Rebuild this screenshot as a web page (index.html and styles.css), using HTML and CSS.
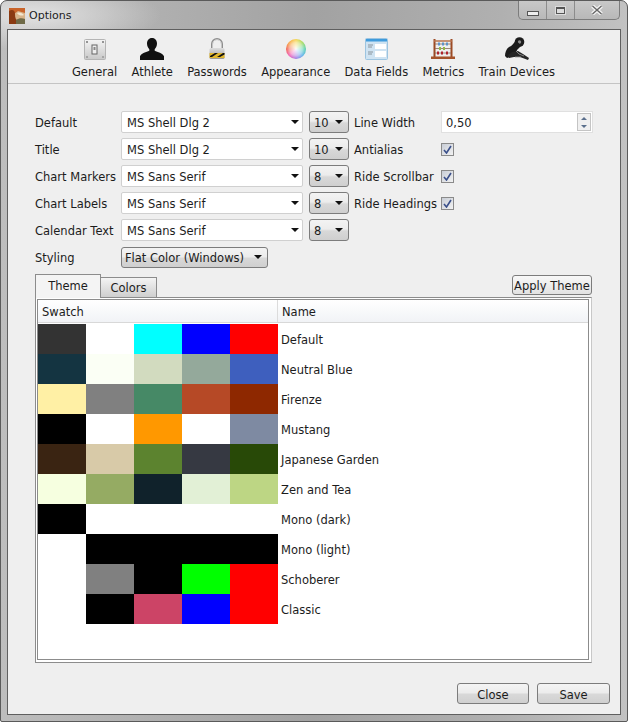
FILE: index.html
```html
<!DOCTYPE html>
<html lang="en">
<head>
    <meta charset="UTF-8">
    <meta name="viewport" content="width=device-width, initial-scale=1.0">
    <title>Options</title>
    <link rel="stylesheet" href="styles.css">
</head>
<body>
<div class="window">
    <div class="titlebar">
        <svg class="app-icon" width="16" height="16" viewBox="0 0 16 16">
            <rect width="16" height="16" rx="1" fill="#d8b48a"/>
            <path d="M0 0h16v5L9 3 5 6 0 5z" fill="#c9642a"/>
            <path d="M0 3c3-2 6-1 6 3s1 6 3 7v3H0z" fill="#8a3a12"/>
            <path d="M7 12c3-2 6-2 9-1v5H7z" fill="#6f6a48"/>
            <path d="M8 5c3-1 5 0 7 2-2 1-5 1-7-2z" fill="#f2e6d0"/>
        </svg>
        <span class="title-text">Options</span>
        <div class="win-controls">
            <div class="win-btn"><span class="min-glyph"></span></div>
            <div class="win-btn"><span class="max-glyph"></span></div>
            <div class="win-btn win-close">
                <svg width="12" height="10" viewBox="0 0 12 10"><path d="M1.500 1l9 8M10.500 1l-9 8" stroke="#f4f4f4" stroke-width="3.800"/><path d="M1.500 1l9 8M10.500 1l-9 8" stroke="#666" stroke-width="1.400"/></svg>
            </div>
        </div>
    </div>

    <div class="panel">
        <div class="toolbar">
            <div class="tool">
                <svg width="22" height="22" viewBox="0 0 22 22">
                    <defs><linearGradient id="steel" x1="0" y1="0" x2="0" y2="1"><stop offset="0" stop-color="#f4f4f4"/><stop offset="1" stop-color="#c8c8c8"/></linearGradient></defs>
                    <rect x="0.500" y="1.500" width="21" height="20" rx="1" fill="url(#steel)" stroke="#b4b4b4"/>
                    <circle cx="3" cy="4" r="1" fill="#777"/><circle cx="19" cy="4" r="1" fill="#777"/>
                    <circle cx="3" cy="19" r="1" fill="#999"/><circle cx="19" cy="19" r="1" fill="#999"/>
                    <rect x="8" y="7" width="5" height="9" fill="#eee" stroke="#666"/>
                    <rect x="9.500" y="9" width="2" height="3" fill="#888"/>
                </svg>
                <span>General</span>
            </div>
            <div class="tool">
                <svg width="24" height="22" viewBox="0 0 24 22">
                    <path d="M12 0c3.300 0 5 2.600 5 5.600 0 2.400-1 4.400-2.300 5.700v1.500c2.800 1.100 8.100 2.500 9.300 5.400V22H0v-3.800c1.200-2.900 6.500-4.300 9.300-5.400v-1.500C8 10 7 8 7 5.600 7 2.600 8.700 0 12 0z" fill="#111"/>
                </svg>
                <span>Athlete</span>
            </div>
            <div class="tool">
                <svg width="16" height="22" viewBox="0 0 16 22">
                    <defs><linearGradient id="lockbody" x1="0" y1="0" x2="0" y2="1"><stop offset="0" stop-color="#ddd"/><stop offset="1" stop-color="#9a9a9a"/></linearGradient></defs>
                    <path d="M3 11V6a5 5 0 0 1 10 0v5" fill="none" stroke="#8e8e8e" stroke-width="2"/>
                    <path d="M3.600 11V6a4.400 4.400 0 0 1 8.800 0v5" fill="none" stroke="#dcdcdc" stroke-width="0.800"/>
                    <rect x="0.500" y="10" width="15" height="11" rx="1.500" fill="url(#lockbody)"/>
                    <rect x="0.500" y="15" width="15" height="5" fill="#e0b62c"/>
                    <path d="M1 18l5-3h3l-6 4H1zM8 19l6-4h1.500v1.500L11 19z" fill="#111"/>
                </svg>
                <span>Passwords</span>
            </div>
            <div class="tool">
                <div class="colorwheel"></div>
                <span>Appearance</span>
            </div>
            <div class="tool">
                <svg width="23" height="22" viewBox="0 0 23 22">
                    <rect x="0.500" y="0.500" width="22" height="21" rx="1" fill="#cfe3f2" stroke="#9cc4e0"/>
                    <rect x="1" y="1" width="21" height="2.500" fill="#3f9bdc"/>
                    <rect x="10" y="6" width="11" height="5" fill="#fff"/>
                    <rect x="10" y="13" width="11" height="6" fill="#fff"/>
                    <path d="M3 7h5M3 9h4M3 14h5M3 16h4" stroke="#8a949c" stroke-width="1"/>
                </svg>
                <span>Data Fields</span>
            </div>
            <div class="tool">
                <svg width="24" height="22" viewBox="0 0 24 22">
                    <path d="M3.500 1v18M20.500 1v18" stroke="#9c4a24" stroke-width="2"/>
                    <path d="M3 3h18" stroke="#b8734c" stroke-width="1.500"/>
                    <rect x="0" y="18.500" width="24" height="2.500" fill="#a5532a"/>
                    <path d="M4 6h16M4 10.500h16M4 15h16" stroke="#8a6a58" stroke-width="0.800"/>
                    <path d="M7 6h2M11 6h2M15 6h2" stroke="#5f93c8" stroke-width="3.200"/>
                    <path d="M8 10.500h2M12 10.500h2" stroke="#93b84a" stroke-width="3.200"/>
                    <path d="M6 15h2M10 15h2M15 15h2" stroke="#b0242c" stroke-width="3.200"/>
                </svg>
                <span>Metrics</span>
            </div>
            <div class="tool">
                <svg width="24" height="23" viewBox="0 0 24 23" class="tool-train">
                    <circle cx="14.500" cy="5" r="4.800" fill="#1c1c1c"/>
                    <circle cx="14.500" cy="5" r="1.700" fill="#8a8a8a"/>
                    <path d="M11 3l5 6-4 4-1 5-9 3-2-2c0-3 1-7 4-9 3-1 5-4 7-7z" fill="#1c1c1c"/>
                    <path d="M7 15l6-1 5 3 6 4-1 2-8-3-6 0-5 1-1-3z" fill="#262626"/>
                    <path d="M11 14l3 3 5 2M10 20h6" stroke="#9a9a9a" stroke-width="0.800" fill="none"/>
                </svg>
                <span>Train Devices</span>
            </div>
        </div>

        <div class="content">
            <div class="form-grid">
                <label>Default</label>
                <div class="combo edit"><span>MS Shell Dlg 2</span><i></i></div>
                <div class="combo size"><span>10</span><i></i></div>
                <label>Line Width</label>
                <div class="spin">
                    <span>0,50</span>
                    <div class="spin-arrows"><b class="up"></b><b class="down"></b></div>
                </div>

                <label>Title</label>
                <div class="combo edit"><span>MS Shell Dlg 2</span><i></i></div>
                <div class="combo size"><span>10</span><i></i></div>
                <label>Antialias</label>
                <div class="check"><svg width="9" height="9" viewBox="0 0 9 9"><path d="M1 5l2.500 3L8 1" fill="none" stroke="#3a4f8a" stroke-width="1.600"/></svg></div>

                <label>Chart Markers</label>
                <div class="combo edit"><span>MS Sans Serif</span><i></i></div>
                <div class="combo size"><span>8</span><i></i></div>
                <label>Ride Scrollbar</label>
                <div class="check"><svg width="9" height="9" viewBox="0 0 9 9"><path d="M1 5l2.500 3L8 1" fill="none" stroke="#3a4f8a" stroke-width="1.600"/></svg></div>

                <label>Chart Labels</label>
                <div class="combo edit"><span>MS Sans Serif</span><i></i></div>
                <div class="combo size"><span>8</span><i></i></div>
                <label>Ride Headings</label>
                <div class="check"><svg width="9" height="9" viewBox="0 0 9 9"><path d="M1 5l2.500 3L8 1" fill="none" stroke="#3a4f8a" stroke-width="1.600"/></svg></div>

                <label>Calendar Text</label>
                <div class="combo edit"><span>MS Sans Serif</span><i></i></div>
                <div class="combo size"><span>8</span><i></i></div>
                <div class="spacer"></div>
                <div class="spacer"></div>

                <label>Styling</label>
                <div class="combo styling"><span>Flat Color (Windows)</span><i></i></div>
            </div>

            <div class="tabs">
                <div class="tab active">Theme</div>
                <div class="tab">Colors</div>
                <button class="apply">Apply Theme</button>
            </div>

            <div class="pane">
                <div class="table">
                    <div class="table-head">
                        <div class="head-swatch">Swatch</div>
                        <div class="head-name">Name</div>
                    </div>
                    <div class="theme-row">
                        <div class="swatches"><s style="background:#333333"></s><s style="background:#ffffff"></s><s style="background:#00ffff"></s><s style="background:#0000ff"></s><s style="background:#ff0000"></s></div>
                        <span>Default</span>
                    </div>
                    <div class="theme-row">
                        <div class="swatches"><s style="background:#143441"></s><s style="background:#fbfff5"></s><s style="background:#d2dbbf"></s><s style="background:#94a99b"></s><s style="background:#3e5fbe"></s></div>
                        <span>Neutral Blue</span>
                    </div>
                    <div class="theme-row">
                        <div class="swatches"><s style="background:#fff0a5"></s><s style="background:#808080"></s><s style="background:#468966"></s><s style="background:#b64926"></s><s style="background:#8e2800"></s></div>
                        <span>Firenze</span>
                    </div>
                    <div class="theme-row">
                        <div class="swatches"><s style="background:#000000"></s><s style="background:#ffffff"></s><s style="background:#ff9800"></s><s style="background:#ffffff"></s><s style="background:#7e8aa2"></s></div>
                        <span>Mustang</span>
                    </div>
                    <div class="theme-row">
                        <div class="swatches"><s style="background:#3a2412"></s><s style="background:#d8caa8"></s><s style="background:#5c832f"></s><s style="background:#363942"></s><s style="background:#284907"></s></div>
                        <span>Japanese Garden</span>
                    </div>
                    <div class="theme-row">
                        <div class="swatches"><s style="background:#f6ffe0"></s><s style="background:#95ab63"></s><s style="background:#10222b"></s><s style="background:#e2f0d6"></s><s style="background:#bdd684"></s></div>
                        <span>Zen and Tea</span>
                    </div>
                    <div class="theme-row">
                        <div class="swatches"><s style="background:#000000"></s><s style="background:#ffffff"></s><s style="background:#ffffff"></s><s style="background:#ffffff"></s><s style="background:#ffffff"></s></div>
                        <span>Mono (dark)</span>
                    </div>
                    <div class="theme-row">
                        <div class="swatches"><s style="background:#ffffff"></s><s style="background:#000000"></s><s style="background:#000000"></s><s style="background:#000000"></s><s style="background:#000000"></s></div>
                        <span>Mono (light)</span>
                    </div>
                    <div class="theme-row">
                        <div class="swatches"><s style="background:#ffffff"></s><s style="background:#808080"></s><s style="background:#000000"></s><s style="background:#00ff00"></s><s style="background:#ff0000"></s></div>
                        <span>Schoberer</span>
                    </div>
                    <div class="theme-row">
                        <div class="swatches"><s style="background:#ffffff"></s><s style="background:#000000"></s><s style="background:#cc4466"></s><s style="background:#0000ff"></s><s style="background:#ff0000"></s></div>
                        <span>Classic</span>
                    </div>
                </div>
            </div>

            <div class="actions">
                <button class="btn btn-close">Close</button>
                <button class="btn">Save</button>
            </div>
        </div>
    </div>
</div>
</body>
</html>
```

FILE: styles.css
```css
html, body {
    margin: 0;
    padding: 0;
    background: #fff;
}
body {
    width: 628px;
    height: 723px;
    overflow: hidden;
    font-family: "DejaVu Sans", sans-serif;
    font-size: 11.5px;
    color: #1c1c1c;
}
.window {
    box-sizing: border-box;
    width: 628px;
    height: 722px;
    display: flex;
    flex-direction: column;
    border: 1px solid #5a5a5a;
    border-radius: 7px 7px 2px 2px;
    background:
        radial-gradient(ellipse 130px 34px at 30px 14px, #e2e2e2 0%, rgba(226, 226, 226, 0) 100%),
        linear-gradient(90deg, #bdbdbd 0%, #a2a2a2 50%, #b0b0b0 80%, #c2c2c2 100%);
    background-color: #a8a8a8;
}
.titlebar {
    height: 28px;
    flex: none;
    display: flex;
    align-items: flex-start;
    padding-left: 8px;
}
.app-icon {
    margin-top: 7px;
}
.title-text {
    margin: 7px 0 0 4px;
    font-size: 11px;
    line-height: 15px;
}
.win-controls {
    margin-left: auto;
    margin-right: 7px;
    width: 102px;
    height: 19px;
    display: flex;
    box-sizing: border-box;
    border: 1px solid #7c7c7c;
    border-top: 0;
    border-radius: 0 0 5px 5px;
    background: linear-gradient(#c8c8c8, #b8b8b8);
}
.win-btn {
    width: 27px;
    display: flex;
    align-items: center;
    justify-content: center;
    border-right: 1px solid #8c8c8c;
}
.win-close {
    flex: 1;
    border-right: 0;
}
.min-glyph {
    width: 10px;
    height: 3px;
    margin-top: 7px;
    background: #eee;
    border: 1px solid #555;
}
.max-glyph {
    width: 7px;
    height: 4px;
    background: #ddd;
    border: 1px solid #555;
    border-top-width: 2px;
    outline: 1px solid #ddd;
}
.panel {
    flex: 1;
    margin: 0 6px 6px 6px;
    border: 1px solid #5f5f5f;
    background: #efefef;
    display: flex;
    flex-direction: column;
    min-height: 0;
}
.toolbar {
    height: 53px;
    flex: none;
    display: flex;
    justify-content: center;
    gap: 14.300px;
    padding-right: 1px;
    border-bottom: 1px solid #c4c4c4;
}
.tool {
    display: flex;
    flex-direction: column;
    align-items: center;
    padding-top: 8px;
}
.tool svg, .colorwheel {
    height: 22px;
    display: block;
}
.tool .tool-train {
    height: 23px;
    margin-top: -1px;
}
.tool span {
    margin-top: 5px;
    line-height: 14px;
    white-space: nowrap;
}
.colorwheel {
    width: 20px;
    height: 20px;
    margin: 1px 0;
    border-radius: 50%;
    background:
        radial-gradient(circle, rgba(255, 255, 255, .95) 0%, rgba(255, 255, 255, .55) 45%, rgba(255, 255, 255, 0) 75%),
        conic-gradient(#f7d13c, #9ad64a, #3fc9a8, #4aa8e8, #9a6ae0, #f04fae, #f0503c, #f7a030, #f7d13c);
}
.content {
    flex: 1;
    position: relative;
    display: flex;
    flex-direction: column;
    padding: 27px 28px 0 27px;
    min-height: 0;
}
.form-grid {
    display: grid;
    grid-template-columns: 86px 188px 45px 87px 1fr;
    grid-auto-rows: 22px;
    row-gap: 5px;
    align-items: center;
}
.form-grid label {
    white-space: nowrap;
    margin-top: 2px;
}
.combo {
    box-sizing: border-box;
    height: 22px;
    display: flex;
    align-items: center;
    white-space: nowrap;
}
.combo span, .spin span {
    margin-top: 2px;
}
.combo i {
    width: 0;
    height: 0;
    margin-left: auto;
    border-left: 4px solid transparent;
    border-right: 4px solid transparent;
    border-top: 4px solid #111;
}
.edit {
    width: 182px;
    padding: 0 1px 0 5px;
    background: #fff;
    border: 1px solid #d0d0d0;
    border-radius: 2px;
}
.edit i {
    margin-right: 2px;
}
.size, .styling {
    padding: 0 5px 0 3px;
    border: 1px solid #7c7c7c;
    border-radius: 3px;
    background: linear-gradient(#f3f3f3 0%, #ececec 45%, #d8d8d8 55%, #cfcfcf 100%);
}
.size {
    width: 40px;
    padding-left: 4px;
}
.styling {
    width: 147px;
    height: 21px;
    padding-left: 3px;
}
.spin {
    box-sizing: border-box;
    width: 152px;
    height: 22px;
    display: flex;
    align-items: center;
    padding: 0 1px 0 4px;
    background: #fff;
    border: 1px solid #e0e0e0;
}
.spin-arrows {
    margin-left: auto;
    width: 14px;
    height: 18px;
    display: flex;
    flex-direction: column;
    border: 1px solid #c4c4c4;
    box-sizing: border-box;
    background: #f0f0f0;
}
.spin-arrows b {
    flex: 1;
    display: flex;
    align-items: center;
    justify-content: center;
}
.spin-arrows b::after {
    content: "";
    border-left: 3px solid transparent;
    border-right: 3px solid transparent;
}
.spin-arrows .up::after {
    border-bottom: 3px solid #5a6f8c;
}
.spin-arrows .down::after {
    border-top: 3px solid #5a6f8c;
}
.check {
    box-sizing: border-box;
    width: 13px;
    height: 13px;
    display: flex;
    align-items: center;
    justify-content: center;
    border: 1px solid #8a8a8a;
    background: linear-gradient(135deg, #c8cdd6, #f2f2f2);
}
.tabs {
    height: 24px;
    margin-top: 6px;
    margin-bottom: -1px;
    display: flex;
    align-items: flex-end;
    position: relative;
    z-index: 1;
}
.tab {
    box-sizing: border-box;
    height: 21px;
    width: 56px;
    line-height: 20px;
    text-align: center;
    border: 1px solid #8c8c8c;
    border-left: 0;
    background: linear-gradient(#f4f4f4, #cfcfcf);
}
.tab.active {
    height: 24px;
    width: 66px;
    line-height: 23px;
    border-left: 1px solid #8c8c8c;
    border-bottom: 0;
    background: #f4f4f4;
}
.apply {
    box-sizing: border-box;
    margin-left: auto;
    margin-bottom: 3px;
    width: 80px;
    height: 20px;
    padding: 2px 0 0;
    font: inherit;
    color: inherit;
    white-space: nowrap;
    border: 1px solid #7c7c7c;
    border-radius: 3px;
    background: linear-gradient(#f8f8f8, #e2e2e2);
}
.pane {
    box-sizing: border-box;
    width: 557px;
    height: 366px;
    padding: 1px;
    border: 1px solid #8c8c8c;
    border-right-color: #c8c8c8;
    background: #fff;
    flex: none;
}
.table {
    box-sizing: border-box;
    height: 361px;
    width: 552px;
    border: 1px solid #8c8c8c;
    background: #fff;
}
.table-head {
    height: 22px;
    display: flex;
    align-items: center;
    background: linear-gradient(#fff, #f1f3f6);
    border-bottom: 1px solid #d8d8d8;
    margin-bottom: 1px;
}
.head-swatch {
    box-sizing: border-box;
    width: 240px;
    height: 100%;
    padding-left: 4px;
    line-height: 24px;
    border-right: 1px solid #dcdcdc;
}
.head-name {
    padding-left: 4px;
    height: 100%;
    line-height: 24px;
}
.theme-row {
    height: 30px;
    display: flex;
    align-items: center;
}
.swatches {
    display: flex;
    height: 100%;
    flex: none;
    width: 240px;
}
.swatches s {
    flex: 1;
}
.theme-row span {
    padding-left: 3px;
    margin-top: 2px;
}
.actions {
    position: absolute;
    right: 10px;
    bottom: 10px;
    display: flex;
    gap: 8px;
}
.btn {
    box-sizing: border-box;
    width: 73px;
    height: 21px;
    padding: 2px 0 0;
    font: inherit;
    color: inherit;
    border: 1px solid #7c7c7c;
    border-radius: 3px;
    background: linear-gradient(#f4f4f4 0%, #ececec 45%, #d8d8d8 55%, #d0d0d0 100%);
}
.btn-close {
    width: 72px;
}
.spacer {
    height: 1px;
}
```
